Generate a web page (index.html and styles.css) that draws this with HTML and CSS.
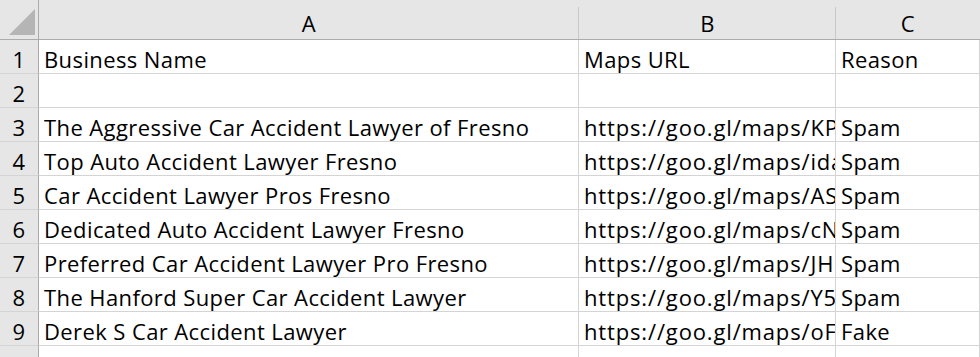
FILE: index.html
```html
<!DOCTYPE html>
<html>
<head>
<meta charset="utf-8">
<link rel="stylesheet" href="styles.css">
</head>
<body>
<div class="sheet">
  <div class="corner"><svg width="26" height="26" viewBox="0 0 26 26"><polygon points="26,0 26,26 0,26" fill="#b5b5b5"/></svg></div>
  <div class="colhead">A</div>
  <div class="colhead">B</div>
  <div class="colhead last">C</div>

  <div class="rowhead">1</div><div class="cell">Business Name</div><div class="cell">Maps URL</div><div class="cell">Reason</div>
  <div class="rowhead">2</div><div class="cell"></div><div class="cell"></div><div class="cell"></div>
  <div class="rowhead">3</div><div class="cell">The Aggressive Car Accident Lawyer of Fresno</div><div class="cell url">https://goo.gl/maps/KPxq9v</div><div class="cell">Spam</div>
  <div class="rowhead">4</div><div class="cell">Top Auto Accident Lawyer Fresno</div><div class="cell url">https://goo.gl/maps/idaW2k</div><div class="cell">Spam</div>
  <div class="rowhead">5</div><div class="cell">Car Accident Lawyer Pros Fresno</div><div class="cell url">https://goo.gl/maps/ASr7tQ</div><div class="cell">Spam</div>
  <div class="rowhead">6</div><div class="cell">Dedicated Auto Accident Lawyer Fresno</div><div class="cell url">https://goo.gl/maps/cNb3pL</div><div class="cell">Spam</div>
  <div class="rowhead">7</div><div class="cell">Preferred Car Accident Lawyer Pro Fresno</div><div class="cell url">https://goo.gl/maps/JHk8sd</div><div class="cell">Spam</div>
  <div class="rowhead">8</div><div class="cell">The Hanford Super Car Accident Lawyer</div><div class="cell url">https://goo.gl/maps/Y5tZm1</div><div class="cell">Spam</div>
  <div class="rowhead">9</div><div class="cell">Derek S Car Accident Lawyer</div><div class="cell url">https://goo.gl/maps/oFfe2r</div><div class="cell">Fake</div>
  <div class="rowhead">10</div><div class="cell">Adam's Car Accident Lawyer Merced</div><div class="cell url">https://goo.gl/maps/2gWx4h</div><div class="cell">Spam</div>
</div>
</body>
</html>
```
FILE: styles.css
```css
html, body {
  margin: 0;
  padding: 0;
  background: #ffffff;
  overflow: hidden;
}
.sheet {
  display: grid;
  grid-template-columns: 39px 540px 257px 1fr;
  grid-template-rows: 40px repeat(10, 34px);
  font-family: "Open Sans", Lato, sans-serif;
  font-size: 22px;
  letter-spacing: 0.4px;
  color: #000;
  width: 980px;
}
.sheet > div {
  box-sizing: border-box;
  overflow: hidden;
  white-space: nowrap;
}
.corner {
  background: #e6e6e6;
  border-right: 1px solid #ababab;
  border-bottom: 1px solid #ababab;
  display: flex;
  align-items: flex-end;
  justify-content: flex-end;
  padding: 0 3px 4px 0;
}
.corner svg { display: block; }
.colhead {
  background: linear-gradient(#c8c8c8, #c8c8c8) right bottom / 1px 32px no-repeat, #e6e6e6;
  border-bottom: 1px solid #ababab;
  display: flex;
  justify-content: center;
  align-items: flex-end;
  padding-bottom: 5px;
  line-height: 1;
}
.colhead.last { background: #e6e6e6; }
.rowhead {
  background: #e6e6e6;
  border-right: 1px solid #ababab;
  border-bottom: 1px solid #d4d4d4;
  display: flex;
  justify-content: center;
  align-items: flex-end;
  padding-bottom: 3.5px;
  line-height: 1;
}
.cell {
  border-right: 1px solid #d4d4d4;
  border-bottom: 1px solid #d4d4d4;
  display: flex;
  align-items: flex-end;
  padding: 0 0 3.5px 5px;
  line-height: 1;
}
.cell.url { letter-spacing: 0.85px; }
```
